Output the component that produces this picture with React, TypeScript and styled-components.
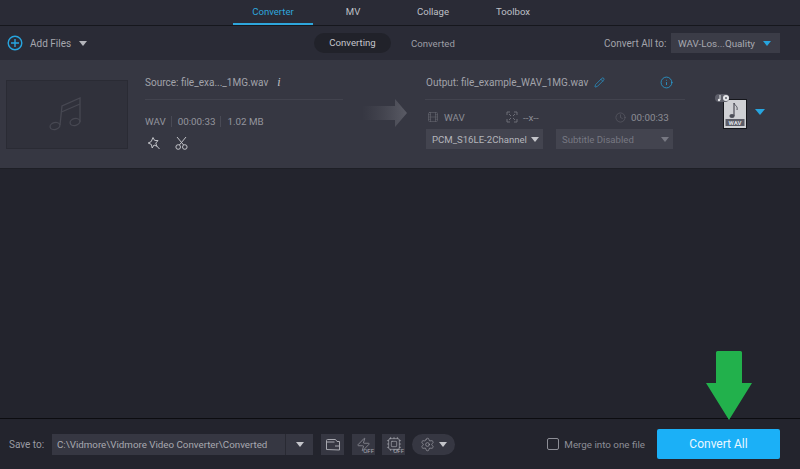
import React from 'react'
import styled, { createGlobalStyle } from 'styled-components'
import { Clock, Cpu, Film, Info, Pencil, Settings, Zap } from 'lucide-react'

const GlobalStyle = createGlobalStyle`
  html, body { margin: 0; padding: 0; background: #23242d; }
  * { box-sizing: border-box; }
`

const Page = styled.div`
  position: relative;
  width: 800px;
  height: 469px;
  display: flex;
  flex-direction: column;
  overflow: hidden;
  background: #23242d;
  color: #b4b5bb;
  font-family: Roboto, "Liberation Sans", sans-serif;
  font-size: 9.6px;
`

const TopNav = styled.nav`
  height: 26px;
  padding-left: 233px;
  display: flex;
  flex-shrink: 0;
  background: #2a2b36;
  border-bottom: 1px solid #16171d;
`

const NavTab = styled.div<{ $active?: boolean }>`
  width: 80px;
  height: 25px;
  text-align: center;
  line-height: 23px;
  font-size: 9.6px;
  color: ${p => (p.$active ? '#2ea6dc' : '#bfc0c6')};
  border-bottom: 2px solid ${p => (p.$active ? '#2ea6dc' : 'transparent')};
`

const Toolbar = styled.div`
  height: 34px;
  flex-shrink: 0;
  display: flex;
  align-items: center;
  padding-left: 7px;
  background: #2a2b36;
`

const AddFiles = styled.div`
  width: 307px;
  display: flex;
  align-items: center;
`

const AddLabel = styled.span`
  margin-left: 7px;
  margin-right: 8px;
  font-size: 10px;
  color: #a6a7ae;
`

const Caret = styled.span<{ $color?: string; $size?: number }>`
  display: inline-block;
  flex-shrink: 0;
  width: 0;
  height: 0;
  border-left: ${p => p.$size ?? 4}px solid transparent;
  border-right: ${p => p.$size ?? 4}px solid transparent;
  border-top: ${p => (p.$size ?? 4) + 1}px solid ${p => p.$color ?? '#b4b5bb'};
`

const StatusPill = styled.div`
  width: 77px;
  height: 20px;
  line-height: 20px;
  border-radius: 10px;
  text-align: center;
  background: #21222a;
  color: #c4c5ca;
`

const StatusText = styled.div`
  width: 213px;
  padding-left: 20px;
  color: #9d9ea5;
`

const ConvertAllLabel = styled.div`
  width: 67px;
  font-size: 10px;
  color: #a2a3aa;
`

const FormatSelect = styled.div`
  width: 109px;
  height: 20px;
  padding: 0 9px 0 7px;
  display: flex;
  align-items: center;
  justify-content: space-between;
  background: #3b3c47;
  font-size: 9.8px;
  color: #a8a9b0;
`

const FileRow = styled.section`
  height: 109px;
  flex-shrink: 0;
  display: flex;
  background: #363742;
  border-bottom: 1px solid #1e1f26;
`

const Thumb = styled.div`
  width: 122px;
  height: 69px;
  flex-shrink: 0;
  margin: 20px 17px 0 6px;
  display: flex;
  align-items: center;
  justify-content: center;
  background: #30313b;
  border: 1px solid #2a2b34;
`

const SourceColumn = styled.div`
  width: 198px;
  flex-shrink: 0;
  margin-right: 19px;
  padding-top: 15px;
`

const NameLine = styled.div`
  height: 14px;
  display: flex;
  align-items: center;
  color: #a2a3aa;
  font-size: 10px;
  white-space: nowrap;
`

const InfoGlyph = styled.i`
  margin-left: 9px;
  font-family: "Liberation Serif", serif;
  font-size: 12px;
  color: #c2c3c8;
`

const Divider = styled.div`
  height: 1px;
  margin-top: 10px;
  background: #42434e;
`

const MetaLine = styled.div`
  margin-top: 15px;
  height: 12px;
  display: flex;
  align-items: center;
  color: #94959d;
  font-size: 9.8px;
`

const MetaItem = styled.span<{ $last?: boolean }>`
  padding-right: 5px;
  margin-right: 6px;
  border-right: ${p => (p.$last ? 'none' : '1px solid #494a55')};
`

const EditIcons = styled.div`
  margin-top: 9px;
  padding-left: 2px;
  display: flex;
  gap: 14px;
  color: #c2c3c8;
`

const ConvertArrow = styled.svg`
  flex-shrink: 0;
  margin-top: 39px;
`

const OutputColumn = styled.div`
  width: 260px;
  flex-shrink: 0;
  margin-left: 17px;
  margin-right: 30px;
  padding-top: 15px;
`

const OutputHead = styled(NameLine)`
  justify-content: space-between;
  padding: 0 12px 0 1px;
`

const OutputName = styled.span`
  display: flex;
  align-items: center;
  gap: 6px;
`

const SpecLine = styled.div`
  margin-top: 11px;
  padding-left: 2px;
  height: 12px;
  display: flex;
  align-items: center;
  color: #8c8d95;
  font-size: 9.8px;
`

const SpecCell = styled.span<{ $width: number }>`
  width: ${p => p.$width}px;
  display: flex;
  align-items: center;
  gap: 5px;
`

const OptionRow = styled.div`
  margin-top: 6px;
  padding-left: 1px;
  display: flex;
  gap: 13px;
`

const OptionSelect = styled.div<{ $disabled?: boolean }>`
  width: 117px;
  height: 20px;
  padding: 0 4px 0 6px;
  display: flex;
  align-items: center;
  justify-content: space-between;
  white-space: nowrap;
  background: #43444f;
  font-size: 9.6px;
  color: ${p => (p.$disabled ? '#777882' : '#b4b5bb')};
`

const FormatColumn = styled.div`
  padding-top: 34px;
  display: flex;
  align-items: center;
  align-self: flex-start;
  gap: 6px;
`

const Main = styled.main`
  flex: 1;
  background: #23242d;
`

const Footer = styled.footer`
  height: 51px;
  flex-shrink: 0;
  display: flex;
  align-items: center;
  padding: 0 20px 0 9px;
  background: #23242d;
  border-top: 1px solid #0c0c10;
`

const SaveLabel = styled.span`
  width: 43px;
  color: #9a9ba2;
  font-size: 10px;
`

const PathBox = styled.div`
  width: 261px;
  height: 21px;
  display: flex;
  align-items: center;
  background: #363742;
  color: #a8a9b0;
  font-size: 9.75px;
`

const PathText = styled.span`
  width: 234px;
  padding-left: 5px;
  white-space: nowrap;
  border-right: 1px solid #292a33;
  line-height: 21px;
`

const PathCaret = styled.span`
  flex: 1;
  display: flex;
  justify-content: center;
`

const ToolButton = styled.div<{ $gap?: number }>`
  position: relative;
  width: 23px;
  height: 21px;
  margin-left: ${p => p.$gap ?? 8}px;
  display: flex;
  align-items: center;
  justify-content: center;
  background: #363742;
  color: #a8a9b0;
`

const OffTag = styled.span`
  position: absolute;
  right: 1px;
  bottom: 1px;
  font-size: 6px;
  line-height: 6px;
  color: #a8a9b0;
`

const GearPill = styled.div`
  width: 43px;
  height: 21px;
  margin-left: 7px;
  display: flex;
  align-items: center;
  justify-content: center;
  gap: 4px;
  border-radius: 11px;
  background: #363742;
  color: #a8a9b0;
`

const MergeLabel = styled.label`
  margin-left: auto;
  margin-right: 12px;
  display: flex;
  align-items: center;
  gap: 5px;
  color: #8d8e96;
  font-size: 9.8px;
`

const MergeBox = styled.span`
  width: 12px;
  height: 12px;
  border: 1px solid #8d8e96;
  border-radius: 2px;
`

const ConvertButton = styled.button`
  width: 123px;
  height: 30px;
  padding: 0;
  border: none;
  border-radius: 2px;
  background: #1bb0f7;
  color: #e9f7ff;
  font-family: inherit;
  font-size: 12px;
`

const GreenArrow = styled.svg`
  position: absolute;
  left: 706px;
  top: 351px;
`

const AddIcon = () => (
  <svg width="16" height="16" viewBox="0 0 16 16" fill="none" stroke="#27a5df" strokeWidth="1.4">
    <circle cx="8" cy="8" r="6.8" />
    <path d="M8 4v8M4 8h8" />
  </svg>
)

const NoteIcon = () => (
  <svg width="38" height="38" viewBox="0 0 38 38" fill="none" stroke="#474852" strokeWidth="1.3">
    <ellipse cx="7" cy="30" rx="5" ry="3.4" transform="rotate(-15 7 30)" />
    <ellipse cx="27" cy="26" rx="5" ry="3.4" transform="rotate(-15 27 26)" />
    <path d="M12 29 14 10 32 2v24" />
    <path d="M13.4 16 32 8" />
  </svg>
)

const FxIcon = () => (
  <svg width="14" height="14" viewBox="0 0 14 14" fill="none" stroke="currentColor" strokeWidth="1">
    <path d="M6 1.5 7.6 4.4 11 4.6 8.8 7l1 3.2L7 9l-1.8 3-.8-3.5L1.2 7l3-1.4z" />
    <path d="M9.6 9.8 12.5 13" />
  </svg>
)

const CutIcon = () => (
  <svg width="13" height="14" viewBox="0 0 13 14" fill="none" stroke="currentColor" strokeWidth="1">
    <circle cx="3.2" cy="11" r="2.3" />
    <circle cx="9.8" cy="11" r="2.3" />
    <path d="M4.4 9 11 1M8.6 9 2 1" />
  </svg>
)

const FolderIcon = () => (
  <svg width="16" height="14" viewBox="0 0 16 14" fill="none" stroke="currentColor" strokeWidth="1">
    <path d="M1.5 12.5v-9a1 1 0 0 1 1-1h8l1.5 2h2.5v8.5z" />
    <path d="M1.5 5h8M10 9h4.5" />
  </svg>
)

const FitIcon = () => (
  <svg width="12" height="12" viewBox="0 0 12 12" fill="none" stroke="#6d6e77" strokeWidth="1">
    <path d="M1 4V1h3M8 1h3v3M11 8v3H8M4 11H1V8M3 3l2 2M9 3 7 5M9 9 7 7M3 9l2-2" />
  </svg>
)

const WavFileIcon = () => (
  <svg width="34" height="35" viewBox="0 0 34 35">
    <rect x="8.5" y="5.5" width="23" height="29" fill="#cfd0d4" stroke="#15161b" />
    <path d="M19 9v13" stroke="#4d4e58" strokeWidth="1.2" />
    <path d="M19 9c1 3 4 3 3 7" stroke="#4d4e58" fill="none" />
    <ellipse cx="17" cy="22" rx="2.6" ry="1.9" fill="#4d4e58" />
    <rect x="10.5" y="25" width="19" height="7" fill="#5b5c66" />
    <text x="20" y="31" textAnchor="middle" fontSize="6" fontWeight="700" fill="#dcdde0">WAV</text>
    <rect x="0" y="0" width="14" height="8" rx="4" fill="#5d5e69" />
    <circle cx="11" cy="4" r="3" fill="#e4e5e8" />
    <circle cx="11" cy="4" r="1" fill="#5d5e69" />
    <path d="M5 1v5" stroke="#e4e5e8" />
    <circle cx="4" cy="6" r="1.2" fill="#e4e5e8" />
  </svg>
)

export default function App() {
  return (
    <Page>
      <GlobalStyle />
      <TopNav>
        <NavTab $active>Converter</NavTab>
        <NavTab>MV</NavTab>
        <NavTab>Collage</NavTab>
        <NavTab>Toolbox</NavTab>
      </TopNav>

      <Toolbar>
        <AddFiles>
          <AddIcon />
          <AddLabel>Add Files</AddLabel>
          <Caret />
        </AddFiles>
        <StatusPill>Converting</StatusPill>
        <StatusText>Converted</StatusText>
        <ConvertAllLabel>Convert All to:</ConvertAllLabel>
        <FormatSelect>
          WAV-Los...Quality
          <Caret $color="#27a5df" />
        </FormatSelect>
      </Toolbar>

      <FileRow>
        <Thumb>
          <NoteIcon />
        </Thumb>
        <SourceColumn>
          <NameLine>
            Source: file_exa..._1MG.wav
            <InfoGlyph>i</InfoGlyph>
          </NameLine>
          <Divider />
          <MetaLine>
            <MetaItem>WAV</MetaItem>
            <MetaItem>00:00:33</MetaItem>
            <MetaItem $last>1.02 MB</MetaItem>
          </MetaLine>
          <EditIcons>
            <FxIcon />
            <CutIcon />
          </EditIcons>
        </SourceColumn>

        <ConvertArrow width="46" height="28" viewBox="0 0 46 28">
          <defs>
            <linearGradient id="arrowFade" x1="0" x2="1" y1="0" y2="0">
              <stop offset="0" stopColor="#4d4e58" stopOpacity="0" />
              <stop offset="1" stopColor="#5a5b65" />
            </linearGradient>
          </defs>
          <path d="M0 7h33V0l12 14-12 14v-7H0z" fill="url(#arrowFade)" />
        </ConvertArrow>

        <OutputColumn>
          <OutputHead>
            <OutputName>
              Output: file_example_WAV_1MG.wav
              <Pencil size={11} color="#27a5df" strokeWidth={1.4} />
            </OutputName>
            <Info size={13} color="#27a5df" strokeWidth={1.4} />
          </OutputHead>
          <Divider />
          <SpecLine>
            <SpecCell $width={79}>
              <Film size={12} strokeWidth={1} color="#6d6e77" />
              WAV
            </SpecCell>
            <SpecCell $width={109}>
              <FitIcon />
              --x--
            </SpecCell>
            <SpecCell $width={60}>
              <Clock size={11} strokeWidth={1} color="#6d6e77" />
              00:00:33
            </SpecCell>
          </SpecLine>
          <OptionRow>
            <OptionSelect>
              PCM_S16LE-2Channel
              <Caret $color="#c4c5ca" />
            </OptionSelect>
            <OptionSelect $disabled>
              Subtitle Disabled
              <Caret $color="#777882" />
            </OptionSelect>
          </OptionRow>
        </OutputColumn>

        <FormatColumn>
          <WavFileIcon />
          <Caret $color="#27a5df" $size={5} />
        </FormatColumn>
      </FileRow>

      <Main />

      <Footer>
        <SaveLabel>Save to:</SaveLabel>
        <PathBox>
          <PathText>C:\Vidmore\Vidmore Video Converter\Converted</PathText>
          <PathCaret>
            <Caret $color="#c4c5ca" />
          </PathCaret>
        </PathBox>
        <ToolButton>
          <FolderIcon />
        </ToolButton>
        <ToolButton>
          <Zap size={15} strokeWidth={1} />
          <OffTag>OFF</OffTag>
        </ToolButton>
        <ToolButton $gap={7}>
          <Cpu size={16} strokeWidth={1} />
          <OffTag>OFF</OffTag>
        </ToolButton>
        <GearPill>
          <Settings size={15} strokeWidth={1} />
          <Caret $color="#c4c5ca" />
        </GearPill>
        <MergeLabel>
          <MergeBox />
          Merge into one file
        </MergeLabel>
        <ConvertButton>Convert All</ConvertButton>
      </Footer>

      <GreenArrow width="46" height="69" viewBox="0 0 46 69">
        <path d="M10 1.5a1.5 1.5 0 0 1 1.5-1.5h23a1.5 1.5 0 0 1 1.5 1.5V32h10L23 69 0 32h10z" fill="#22b14c" />
      </GreenArrow>
    </Page>
  )
}
